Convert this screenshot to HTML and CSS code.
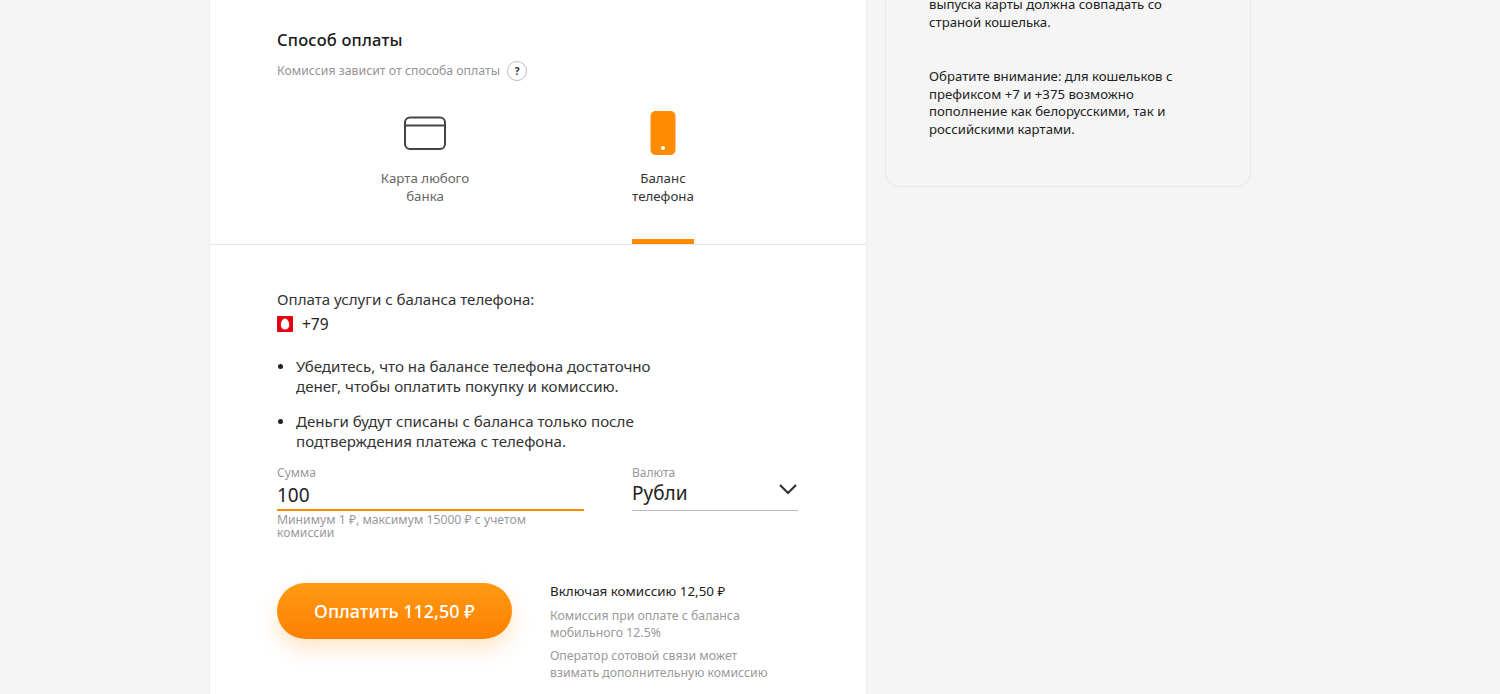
FILE: index.html
```html
<!DOCTYPE html>
<html lang="ru">
<head>
<meta charset="utf-8">
<title>Способ оплаты</title>
<link rel="stylesheet" href="styles.css">
</head>
<body>
<div class="page">
  <main class="panel">
    <section class="method">
      <h2 class="method-title">Способ оплаты</h2>
      <div class="method-hint"><span>Комиссия зависит от способа оплаты</span><span class="help">?</span></div>
      <div class="tabs">
        <div class="tab">
          <svg class="tab-icon" width="44" height="44" viewBox="0 0 44 44"><rect x="2" y="6.500" width="40" height="31.500" rx="5" fill="none" stroke="#444" stroke-width="2"/><path d="M2 14.500h40" stroke="#444" stroke-width="2"/></svg>
          <div class="tab-label">Карта любого<br>банка</div>
        </div>
        <div class="tab tab-active">
          <svg class="tab-icon" width="44" height="44" viewBox="0 0 44 44"><rect x="9.500" y="0" width="25" height="44" rx="5" fill="#ff8c00"/><circle cx="22" cy="37" r="2" fill="#fff"/></svg>
          <div class="tab-label">Баланс<br>телефона</div>
        </div>
      </div>
    </section>
    <section class="details">
      <p class="lead">Оплата услуги с баланса телефона:</p>
      <div class="phone">
        <svg width="16" height="16" viewBox="0 0 16 16"><rect width="16" height="16" rx="1" fill="#e60012"/><path d="M8 2.500C5.800 2.500 3.800 5.500 3.800 9c0 2.800 1.800 4.500 4.200 4.500s4.200-1.700 4.200-4.500C12.200 5.500 10.200 2.500 8 2.500z" fill="#fff"/></svg>
        <span>+79</span>
      </div>
      <ul class="notes">
        <li>Убедитесь, что на балансе телефона достаточно денег, чтобы оплатить покупку и комиссию.</li>
        <li>Деньги будут списаны с баланса только после подтверждения платежа с телефона.</li>
      </ul>
      <div class="fields">
        <div class="field field-sum">
          <div class="field-label">Сумма</div>
          <div class="field-value field-value-active">100</div>
          <div class="field-help">Минимум 1 ₽, максимум 15000 ₽ с учетом комиссии</div>
        </div>
        <div class="field field-currency">
          <div class="field-label">Валюта</div>
          <div class="field-value field-select">
            <span>Рубли</span>
            <svg width="20" height="12" viewBox="0 0 20 12"><path d="M2 2l8 8 8-8" fill="none" stroke="#333" stroke-width="2.200"/></svg>
          </div>
        </div>
      </div>
      <div class="pay">
        <button class="pay-button" type="button">Оплатить 112,50 ₽</button>
        <div class="fee">
          <p class="fee-total">Включая комиссию 12,50 ₽</p>
          <p class="fee-note">Комиссия при оплате с баланса мобильного 12.5%</p>
          <p class="fee-note">Оператор сотовой связи может взимать дополнительную комиссию</p>
        </div>
      </div>
    </section>
  </main>
  <aside class="info">
    <p>выпуска карты должна совпадать со страной кошелька.</p>
    <p>Обратите внимание: для кошельков с префиксом +7 и +375 возможно пополнение как белорусскими, так и российскими картами.</p>
  </aside>
</div>
</body>
</html>
```
FILE: styles.css
```css
* { box-sizing: border-box; }
html, body { margin: 0; height: 694px; overflow: hidden; }
body { background: #f5f5f5; color: #222; font-family: "Noto Sans", "DejaVu Sans", sans-serif; }
p, ul, h2 { margin: 0; padding: 0; }

.page { display: flex; align-items: flex-start; gap: 18px; padding-left: 209px; height: 694px; }

.panel { width: 658px; height: 694px; flex: none; background: #fff; border-left: 1px solid #ececec; border-right: 1px solid #ececec; overflow: hidden; }

.method { height: 245px; padding: 30px 67px 0; border-bottom: 1px solid #e8e8e8; }
.method-title { font-size: 16.500px; line-height: 20px; font-weight: 500; letter-spacing: .2px; color: #1a1a1a; }
.method-hint { display: flex; align-items: center; gap: 7px; margin-top: 11px; font-size: 12.300px; line-height: 20px; color: #949494; }
.help { width: 20px; height: 20px; border: 1px solid #bbb; border-radius: 50%; text-align: center; font-size: 10px; line-height: 18px; font-weight: 700; color: #333; }

.tabs { display: grid; grid-template-columns: 238px 238px; margin-top: 30px; padding-left: 29px; }
.tab { display: flex; flex-direction: column; align-items: center; }
.tab-icon { display: block; overflow: visible; }
.tab-label { margin-top: 14px; padding-bottom: 34px; font-size: 13.300px; line-height: 18px; font-weight: 400; text-align: center; color: #666; }
.tab-active .tab-label { color: #333; border-bottom: 5px solid #ff8c00; }

.details { padding: 44px 67px 0; }
.lead { font-size: 15.100px; line-height: 20px; color: #333; }
.phone { display: flex; align-items: center; gap: 9px; margin-top: 5px; font-size: 15.500px; line-height: 20px; color: #222; }
.notes { list-style: none; margin-top: 22px; width: 400px; }
.notes li { position: relative; padding-left: 19px; font-size: 15.100px; line-height: 20px; color: #333; margin-bottom: 15px; }
.notes li::before { content: ""; position: absolute; left: 1px; top: 8px; width: 5px; height: 5px; border-radius: 50%; background: #222; }

.fields { display: flex; gap: 48px; margin-top: 0; }
.field-sum { width: 307px; }
.field-currency { width: 166px; }
.field-label { font-size: 12px; line-height: 14px; color: #999; }
.field-value { height: 31px; font-size: 19px; line-height: 30px; color: #222; border-bottom: 1px solid #bbb; }
.field-value-active { border-bottom: 2px solid #ff8c00; }
.field-select { display: flex; justify-content: space-between; align-items: flex-start; line-height: 26px; }
.field-select svg { margin-top: 3px; }
.field-help { margin-top: 2px; font-size: 12.200px; line-height: 13px; color: #999; width: 270px; }

.pay { display: flex; gap: 38px; margin-top: 44px; }
.pay-button { flex: none; width: 235px; height: 56px; border: 0; border-radius: 28px; background: linear-gradient(#ff9a12, #ff8000); box-shadow: 0 10px 20px rgba(255, 140, 0, .22); color: #fff; font: 500 18px/20px "Noto Sans", "DejaVu Sans", sans-serif; }
.fee { width: 225px; }
.fee-total { font-size: 13.400px; line-height: 16px; color: #222; }
.fee-note { margin-top: 7px; font-size: 12.300px; line-height: 16.500px; color: #999; }
.fee-total + .fee-note { margin-top: 9px; }

.info { width: 366px; height: 187px; flex: none; display: flex; flex-direction: column; justify-content: flex-end; gap: 37px; padding: 0 72px 48px 43px; border: 1px solid #e8e8e8; border-top: 0; border-radius: 0 0 14px 14px; font-size: 13.200px; line-height: 17.500px; color: #222; overflow: hidden; }
```
